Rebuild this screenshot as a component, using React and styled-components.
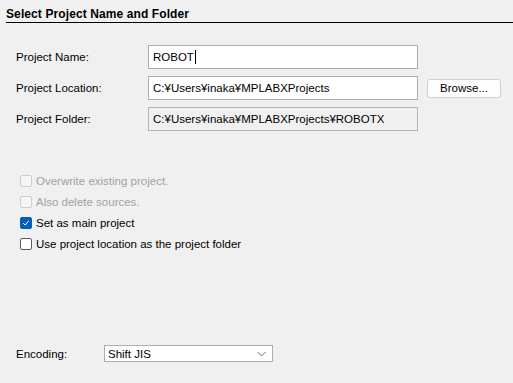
import React from "react"
import styled, { createGlobalStyle } from "styled-components"

const GlobalStyle = createGlobalStyle`
  html, body {
    margin: 0;
    padding: 0;
    background: #f0f0f0;
  }
  body {
    font-family: "Liberation Sans", "Noto Sans CJK JP", sans-serif;
    font-size: 12px;
    color: #000;
  }
`;

const Page = styled.div`
  width: 513px;
  height: 383px;
  display: flex;
  flex-direction: column;
  background: #f0f0f0;
  overflow: hidden;
`;

const Title = styled.h1`
  margin: 0 0 0 6px;
  height: 21px;
  display: flex;
  align-items: flex-end;
  font-size: 12px;
  font-weight: bold;
  line-height: 14px;
  padding-bottom: 1px;
  border-bottom: 1px solid #000;
  letter-spacing: 0.1px;
`;

const Form = styled.div`
  margin-top: 22px;
  padding-left: 16px;
  display: grid;
  grid-template-columns: 132px 270px auto;
  row-gap: 7px;
  align-items: center;
`;

const Label = styled.span`
  font-size: 11.5px;
  line-height: 24px;
`;

const Field = styled.div`
  height: 24px;
  box-sizing: border-box;
  border: 1px solid ${p => (p.$readOnly ? "#b4b4b4" : "#adadad")};
  background: ${p => (p.$readOnly ? "#f0f0f0" : "#fff")};
  padding: 0 4px;
  display: flex;
  align-items: center;
  font-size: 11.5px;
  white-space: nowrap;
`;

const Caret = styled.span`
  display: inline-block;
  width: 1px;
  height: 14px;
  background: #000;
  margin-left: 1px;
`;

const BrowseButton = styled.button`
  margin-left: 9px;
  width: 74px;
  height: 19px;
  box-sizing: border-box;
  border: 1px solid #d0d0d0;
  border-radius: 3px;
  background: #fdfdfd;
  font-family: inherit;
  font-size: 11.5px;
  padding: 0;
  color: #000;
`;

const Checks = styled.div`
  margin-top: 39px;
  padding-left: 20px;
  display: flex;
  flex-direction: column;
`;

const CheckRow = styled.label`
  height: 21px;
  display: flex;
  align-items: center;
  gap: 4px;
  font-size: 11.5px;
  color: ${p => (p.$disabled ? "#a2a2a2" : "#000")};
`;

const Box = styled.span`
  width: 12px;
  height: 12px;
  box-sizing: border-box;
  border-radius: 2px;
  border: 1px solid ${p => (p.$checked ? "#005fb8" : p.$disabled ? "#cfcfcf" : "#5c5c5c")};
  background: ${p => (p.$checked ? "#005fb8" : p.$disabled ? "#f5f5f5" : "#fff")};
  display: flex;
  align-items: center;
  justify-content: center;
`;

const Spacer = styled.div`
  flex: 1;
`;

const EncodingRow = styled.div`
  padding-left: 16px;
  margin-bottom: 21px;
  display: flex;
  align-items: center;
`;

const EncodingLabel = styled.span`
  width: 88px;
  font-size: 11.5px;
`;

const Select = styled.div`
  width: 169px;
  height: 17px;
  box-sizing: border-box;
  border: 1px solid #adadad;
  background: #fff;
  display: flex;
  align-items: center;
  justify-content: space-between;
  padding: 0 6px 0 3px;
  font-size: 11.5px;
`;

function Check({ checked, disabled, children }) {
  return (
    <CheckRow $disabled={disabled}>
      <Box $checked={checked} $disabled={disabled}>
        {checked && (
          <svg width="8" height="8" viewBox="0 0 8 8">
            <path d="M1.2 4.2 L3.2 6 L6.8 1.8" fill="none" stroke="#fff" strokeWidth="1" />
          </svg>
        )}
      </Box>
      {children}
    </CheckRow>
  )
}

export default function App() {
  return (
    <Page>
      <GlobalStyle />
      <Title>Select Project Name and Folder</Title>
      <Form>
        <Label>Project Name:</Label>
        <Field>ROBOT<Caret /></Field>
        <span />
        <Label>Project Location:</Label>
        <Field>C:¥Users¥inaka¥MPLABXProjects</Field>
        <BrowseButton>Browse...</BrowseButton>
        <Label>Project Folder:</Label>
        <Field $readOnly>C:¥Users¥inaka¥MPLABXProjects¥ROBOTX</Field>
        <span />
      </Form>
      <Checks>
        <Check disabled>Overwrite existing project.</Check>
        <Check disabled>Also delete sources.</Check>
        <Check checked>Set as main project</Check>
        <Check>Use project location as the project folder</Check>
      </Checks>
      <Spacer />
      <EncodingRow>
        <EncodingLabel>Encoding:</EncodingLabel>
        <Select>
          <span>Shift JIS</span>
          <svg width="9" height="6" viewBox="0 0 9 6">
            <path d="M0.5 1 L4.5 5 L8.5 1" fill="none" stroke="#707070" strokeWidth="1" />
          </svg>
        </Select>
      </EncodingRow>
    </Page>
  )
}
